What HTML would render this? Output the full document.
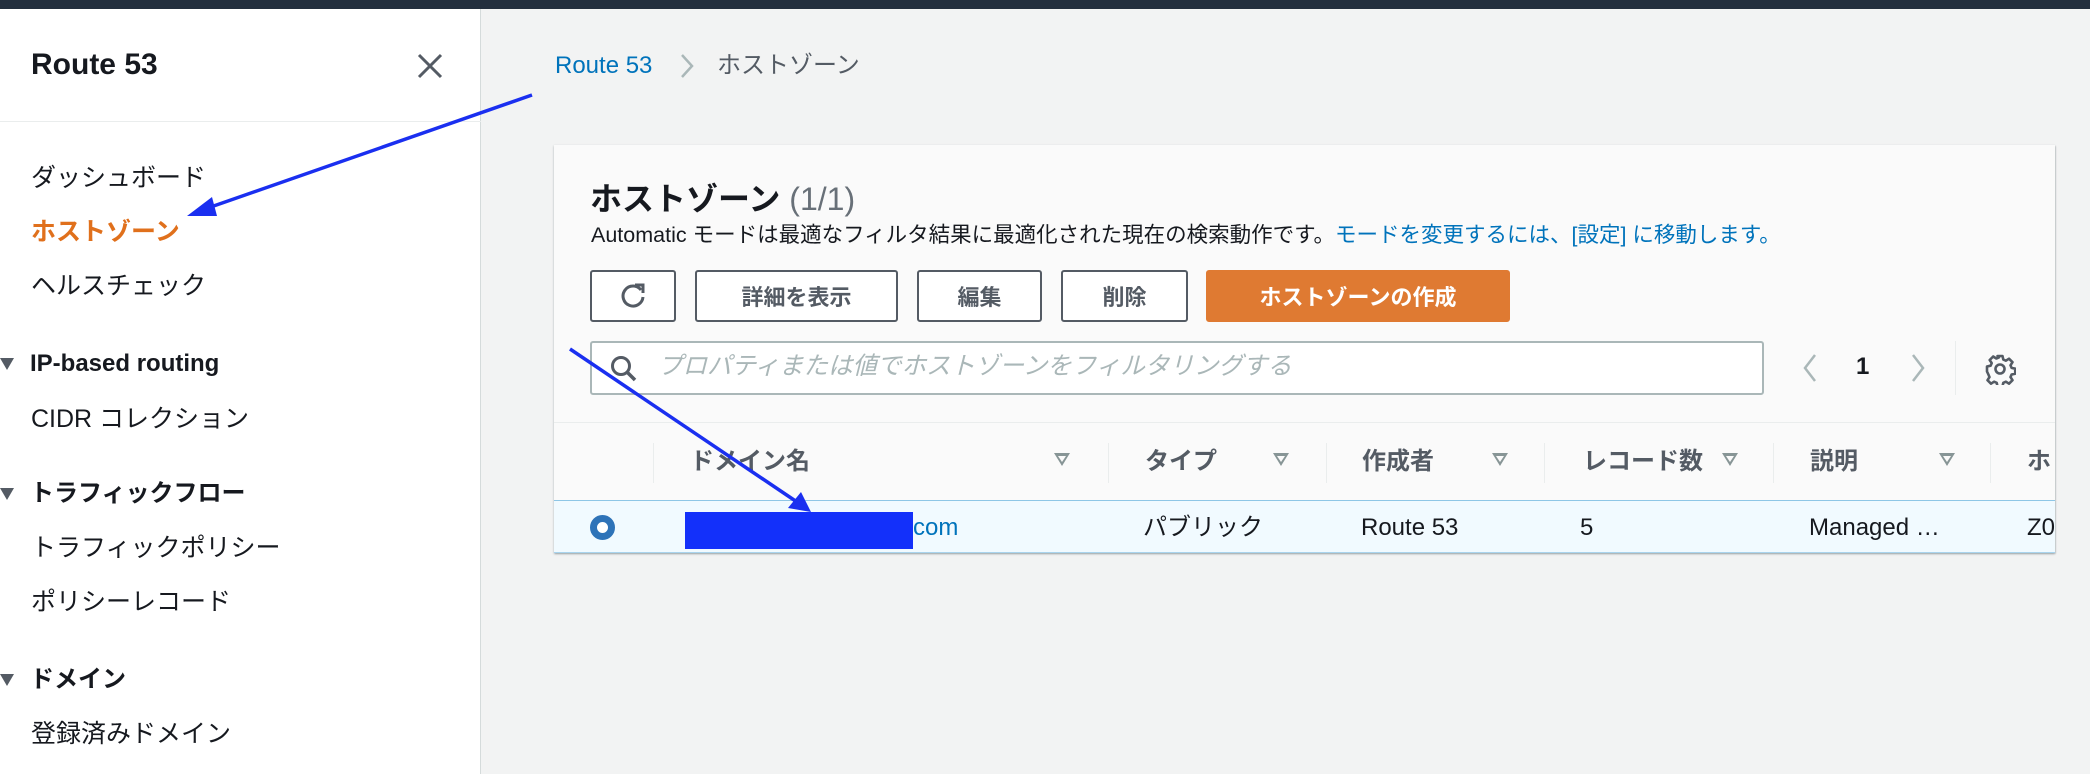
<!DOCTYPE html>
<html><head><meta charset="utf-8"><style>
*{box-sizing:border-box;margin:0;padding:0}
body{width:2090px;height:774px;overflow:hidden;background:#f2f3f3;font-family:"Liberation Sans","Noto Sans CJK JP",sans-serif;color:#16191f;position:relative}
.abs{position:absolute;white-space:nowrap}
.top{left:0;top:0;width:2090px;height:9px;background:#232f3e}
.side{left:0;top:9px;width:481px;height:765px;background:#fff;border-right:1px solid #d5dbdb}
.nav{left:31px;font-size:25px;color:#16191f;line-height:30px}
.sec{font-weight:bold;font-size:24px;color:#16191f;left:30px;line-height:30px}
.tri{left:0;width:0;height:0;border-left:7px solid transparent;border-right:7px solid transparent;border-top:12px solid #545b64}
.card{left:554px;top:145px;width:1501px;height:408px;background:#fafafa;box-shadow:0 1px 2px rgba(0,28,36,.3),1px 1px 1px rgba(0,28,36,.1);overflow:hidden}
.btn{top:125px;height:52px;border:2px solid #545b64;border-radius:3px;background:#fff;font-weight:bold;font-size:22px;color:#545b64;display:flex;align-items:center;justify-content:center}
.th{top:302px;font-weight:bold;font-size:24px;color:#545b64;line-height:30px}
.sep{top:298px;width:1px;height:40px;background:#eaeded}
.dn{top:308px;width:0;height:0;border-left:8px solid transparent;border-right:8px solid transparent;border-top:13px solid #879596}
.dn:after{content:"";position:absolute;left:-4px;top:-10px;border-left:4px solid transparent;border-right:4px solid transparent;border-top:6px solid #fafafa}
.td{top:368px;font-size:24px;line-height:30px;color:#16191f}
</style></head><body>
<div class="abs top"></div>
<div class="abs side"></div>
<div class="abs" style="left:31px;top:48px;font-size:30px;font-weight:bold;line-height:34px">Route 53</div>
<svg class="abs" style="left:416px;top:52px" width="28" height="28" viewBox="0 0 28 28"><path d="M3 3L25 25M25 3L3 25" stroke="#545b64" stroke-width="3"/></svg>
<div class="abs" style="left:0;top:121px;width:481px;height:1px;background:#eaeded"></div>
<div class="abs nav" style="top:163px">ダッシュボード</div>
<div class="abs nav" style="top:217px;color:#e0701c;font-weight:bold">ホストゾーン</div>
<div class="abs nav" style="top:271px">ヘルスチェック</div>
<div class="abs tri" style="top:358px"></div><div class="abs sec" style="top:349px">IP-based routing</div>
<div class="abs nav" style="top:404px">CIDR コレクション</div>
<div class="abs tri" style="top:488px"></div><div class="abs sec" style="top:479px">トラフィックフロー</div>
<div class="abs nav" style="top:533px">トラフィックポリシー</div>
<div class="abs nav" style="top:587px">ポリシーレコード</div>
<div class="abs tri" style="top:674px"></div><div class="abs sec" style="top:665px">ドメイン</div>
<div class="abs nav" style="top:719px">登録済みドメイン</div>

<div class="abs" style="left:555px;top:51px;font-size:24px;color:#0073bb;line-height:30px">Route 53</div>
<svg class="abs" style="left:679px;top:53px" width="16" height="26" viewBox="0 0 16 26"><path d="M3 2L13 13L3 24" fill="none" stroke="#aab7b8" stroke-width="2.5"/></svg>
<div class="abs" style="left:717px;top:51px;font-size:24px;color:#545b64;line-height:30px">ホストゾーン</div>

<div class="abs card">
 <div class="abs" style="left:36px;top:35px;font-size:32px;font-weight:bold;line-height:38px">ホストゾーン <span style="font-weight:normal;color:#687078">(1/1)</span></div>
 <div class="abs" style="left:37px;top:76px;font-size:21.5px;line-height:28px">Automatic モードは最適なフィルタ結果に最適化された現在の検索動作です。<span style="color:#0073bb">モードを変更するには、[設定] に移動します。</span></div>
 <div class="abs btn" style="left:36px;width:86px"><svg width="30" height="30" viewBox="0 0 30 30"><path d="M23 9A10 10 0 1 0 25 16" fill="none" stroke="#545b64" stroke-width="3"/><path d="M17 4L25 4L25 12" fill="none" stroke="#545b64" stroke-width="3"/></svg></div>
 <div class="abs btn" style="left:141px;width:203px">詳細を表示</div>
 <div class="abs btn" style="left:363px;width:125px">編集</div>
 <div class="abs btn" style="left:507px;width:127px">削除</div>
 <div class="abs btn" style="left:652px;width:304px;background:#df7a32;border-color:#df7a32;color:#fff">ホストゾーンの作成</div>
 <div class="abs" style="left:36px;top:196px;width:1174px;height:54px;border:2px solid #aab7b8;border-radius:3px;background:#fff"></div>
 <svg class="abs" style="left:55px;top:209px" width="30" height="30" viewBox="0 0 30 30"><circle cx="12" cy="12" r="8.5" fill="none" stroke="#545b64" stroke-width="3"/><path d="M18 18L26 26" stroke="#545b64" stroke-width="3.5"/></svg>
 <div class="abs" style="left:104px;top:207px;font-size:24.5px;font-style:italic;color:#aab7b8;line-height:30px">プロパティまたは値でホストゾーンをフィルタリングする</div>
 <svg class="abs" style="left:1248px;top:208px" width="16" height="30" viewBox="0 0 16 30"><path d="M13 2L3 15L13 28" fill="none" stroke="#aab7b8" stroke-width="2.5"/></svg>
 <div class="abs" style="left:1302px;top:207px;font-size:24px;font-weight:bold;line-height:30px">1</div>
 <svg class="abs" style="left:1356px;top:208px" width="16" height="30" viewBox="0 0 16 30"><path d="M3 2L13 15L3 28" fill="none" stroke="#aab7b8" stroke-width="2.5"/></svg>
 <div class="abs" style="left:1401px;top:196px;width:1px;height:54px;background:#eaeded"></div>
 <svg class="abs" style="left:1430px;top:208px" width="32" height="32" viewBox="0 0 32 32"><path d="M13.5 3h5l.8 3.6 2.6 1.1 3.1-2 3.5 3.5-2 3.1 1.1 2.6 3.6.8v5l-3.6.8-1.1 2.6 2 3.1-3.5 3.5-3.1-2-2.6 1.1-.8 3.6h-5l-.8-3.6-2.6-1.1-3.1 2-3.5-3.5 2-3.1-1.1-2.6L3 18.5v-5l3.6-.8 1.1-2.6-2-3.1 3.5-3.5 3.1 2 2.6-1.1z" fill="none" stroke="#545b64" stroke-width="2.6" stroke-linejoin="round"/><circle cx="16" cy="16" r="4.5" fill="none" stroke="#545b64" stroke-width="2.6"/></svg>
 <div class="abs" style="left:0;top:277px;width:1501px;height:1px;background:#eaeded"></div>
 <div class="abs sep" style="left:99px"></div>
 <div class="abs th" style="left:136px">ドメイン名</div><div class="abs dn" style="left:500px"></div>
 <div class="abs sep" style="left:554px"></div>
 <div class="abs th" style="left:591px">タイプ</div><div class="abs dn" style="left:719px"></div>
 <div class="abs sep" style="left:772px"></div>
 <div class="abs th" style="left:808px">作成者</div><div class="abs dn" style="left:938px"></div>
 <div class="abs sep" style="left:990px"></div>
 <div class="abs th" style="left:1029px">レコード数</div><div class="abs dn" style="left:1168px"></div>
 <div class="abs sep" style="left:1219px"></div>
 <div class="abs th" style="left:1256px">説明</div><div class="abs dn" style="left:1385px"></div>
 <div class="abs sep" style="left:1436px"></div>
 <div class="abs th" style="left:1473px">ホ</div>
 <div class="abs" style="left:0;top:355px;width:1501px;height:53px;background:#f1faff;border-top:1px solid #8ec6e6;border-bottom:1px solid #a9d4ee"></div>
 <div class="abs" style="left:36px;top:370px;width:25px;height:25px;border-radius:50%;border:7px solid #2e73b8;background:#fff"></div>
 <div class="abs" style="left:131px;top:367px;width:228px;height:37px;background:#1330fa"></div>
 <div class="abs td" style="left:359px;color:#0073bb">com</div>
 <div class="abs td" style="left:589px">パブリック</div>
 <div class="abs td" style="left:807px">Route 53</div>
 <div class="abs td" style="left:1026px">5</div>
 <div class="abs td" style="left:1255px">Managed …</div>
 <div class="abs td" style="left:1473px">Z0</div>
</div>

<svg class="abs" style="left:0;top:0" width="2090" height="774">
 <path d="M532 95L205 209" stroke="#1a2ff0" stroke-width="3.5"/>
 <path d="M187 216L212 197L217 216Z" fill="#1a2ff0"/>
 <path d="M570 349L797 502" stroke="#1a2ff0" stroke-width="3.5"/>
 <path d="M811 512L788 508L801 492Z" fill="#1a2ff0"/>
</svg>
</body></html>
